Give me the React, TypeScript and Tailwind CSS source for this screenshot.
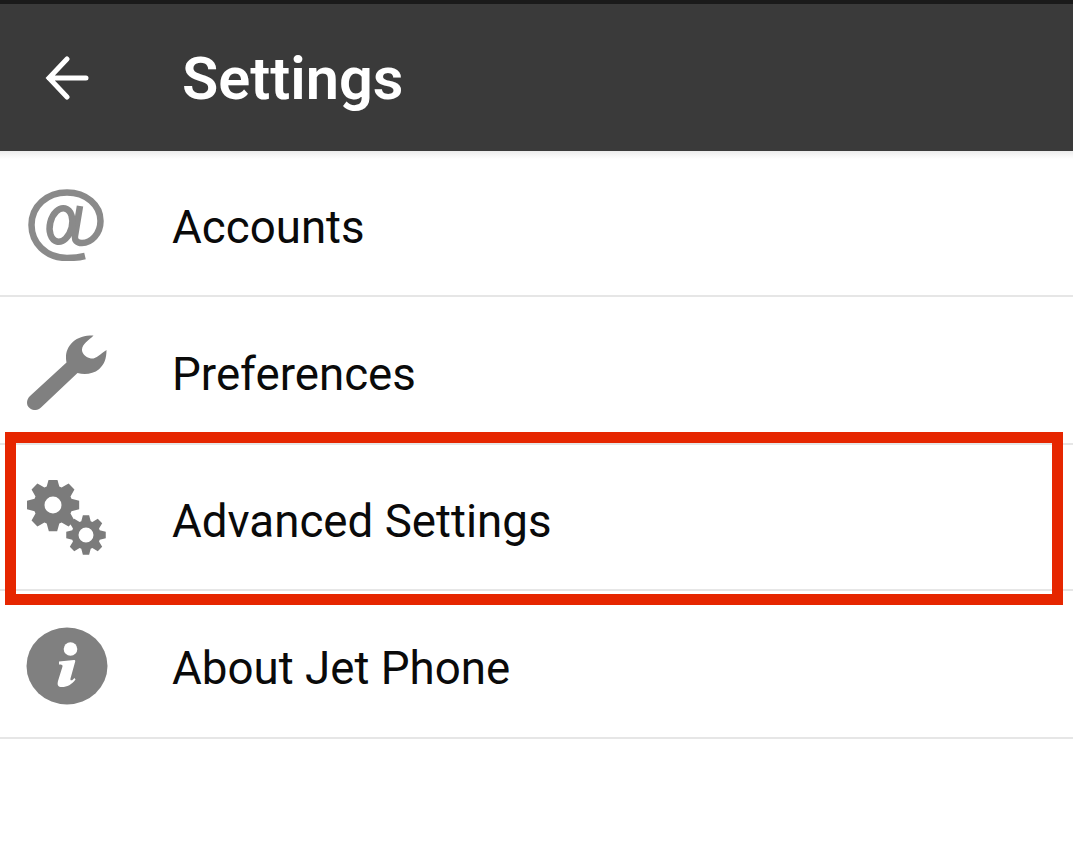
import React from "react";

function gearPath(cx: number, cy: number, rOut: number, rIn: number, rHole: number, teeth: number) {
  const pts: string[] = [];
  const step = (Math.PI * 2) / teeth;
  for (let i = 0; i < teeth; i++) {
    const a = i * step - Math.PI / 2;
    const list: [number, number][] = [
      [a - step * 0.42, rIn],
      [a - step * 0.2, rOut],
      [a + step * 0.2, rOut],
      [a + step * 0.42, rIn],
    ];
    for (const [an, r] of list) {
      pts.push(`${(cx + r * Math.cos(an)).toFixed(2)} ${(cy + r * Math.sin(an)).toFixed(2)}`);
    }
  }
  const ring = `M${pts.join("L")}Z`;
  const hole = `M${cx - rHole} ${cy}a${rHole} ${rHole} 0 1 0 ${rHole * 2} 0a${rHole} ${rHole} 0 1 0 ${-rHole * 2} 0Z`;
  return ring + hole;
}

const GRAY = "#808080";

function AtIcon() {
  return (
    <svg className="mt-[4px] -ml-[2px]" width="76" height="72" viewBox="0 0 76 72" fill="none" stroke="#8a8a8a" strokeWidth="6.5">
      <path d="M57 67C51 68.5 45 69 39 69C17 69 3.5 53 3.5 36C3.5 17 19 3.5 39 3.5C58 3.5 72.5 16 72.5 32C72.5 45 63 54 54 54C48.5 54 46.5 51 47 47L52 17" />
      <ellipse cx="33" cy="36" rx="11" ry="17" transform="rotate(14 33 36)" />
    </svg>
  );
}

function WrenchIcon() {
  return (
    <svg className="mt-[5px]" width="80" height="75" viewBox="0 0 80 78" preserveAspectRatio="none">
      <path
        fill={GRAY}
        d="M66.5 0.5C59 0.3 51 2 45.5 7.5C39.5 13.5 38 21 39.5 28.5L3 63.5C-0.8 67.5 -0.8 72.5 2 75.5C5.5 79 10.5 78.8 14 75.5L50.5 39.5C58 41.5 66 40.5 72 35.5C77.5 30.5 79.5 24 79.5 15.5C75 18.5 71 22.5 66.5 24.5C62 25 57 22 55.5 18C54 14 56 10.5 59 7.5C61.5 5 64.5 3 66.5 0.5Z"
      />
    </svg>
  );
}

function GearsIcon() {
  return (
    <svg className="mt-[2px]" width="80" height="76" viewBox="0 0 80 76">
      <path fill="#7b7b7b" fillRule="evenodd" d={gearPath(26, 25, 26.5, 19.5, 8.5, 8)} />
      <path fill="#7b7b7b" fillRule="evenodd" d={gearPath(59, 55, 20, 14.5, 7.5, 8)} />
    </svg>
  );
}

function InfoIcon() {
  return (
    <svg className="mt-[4px]" width="82" height="78" viewBox="0 0 82 78">
      <ellipse cx="41" cy="39" rx="40.5" ry="38.5" fill={GRAY} />
      <circle cx="44.5" cy="22" r="6.8" fill="#fff" />
      <path
        fill="#fff"
        d="M33 34.5L48 33C49 33 49.5 33.5 49.2 34.5L44.5 51.5C44 53.5 45.5 54 47 52.5L48.5 51L49.5 52.5C46 57.5 41 60 36 60C32 60 31 58 32 54L36.5 39.5C36.8 38 36 37.5 33 37.5Z"
      />
    </svg>
  );
}

function Row({ label, icon, h }: { label: string; icon: React.ReactNode; h: string }) {
  return (
    <div className={`flex items-center border-b-2 border-[#e6e6e6] ${h}`}>
      <div className="ml-[26px] w-[82px] flex items-center justify-center">{icon}</div>
      <span className="ml-[64px] mt-[10px] text-[45.7px] leading-none text-[#0a0a0a] font-['Roboto',sans-serif]">{label}</span>
    </div>
  );
}

export default function App() {
  return (
    <div className="relative h-[847px] w-[1073px] overflow-hidden bg-white font-['Roboto',sans-serif]">
      <div className="h-[4px] bg-[#1a1a1a]" />
      <header className="flex h-[147px] items-center bg-[#3a3a3a]">
        <svg className="ml-[45px]" width="44" height="44" viewBox="0 0 44 44" fill="none" stroke="#fff" strokeWidth="5" strokeLinecap="round">
          <path d="M41 22H4M22 3L4 22l18 19" />
        </svg>
        <h1 className="ml-[93px] mt-[4px] text-[59.5px] leading-none font-semibold text-white">Settings</h1>
      </header>
      <div className="h-[8px] -mb-[8px] bg-gradient-to-b from-[#ececec] to-white" />
      <Row label="Accounts" icon={<AtIcon />} h="h-[146px]" />
      <Row label="Preferences" icon={<WrenchIcon />} h="h-[148px]" />
      <Row label="Advanced Settings" icon={<GearsIcon />} h="h-[146px]" />
      <Row label="About Jet Phone" icon={<InfoIcon />} h="h-[148px]" />
      <div className="absolute left-[5px] top-[432px] h-[173px] w-[1058px] border-[11px] border-[#e62600]" />
    </div>
  );
}
